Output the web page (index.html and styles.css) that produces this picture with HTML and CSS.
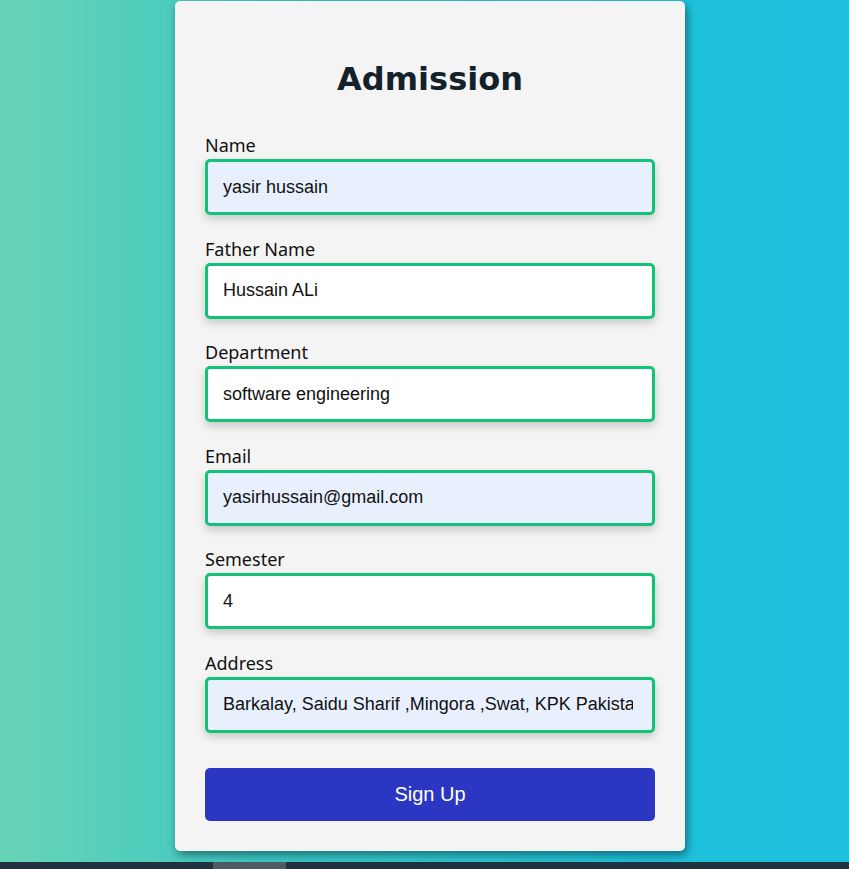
FILE: index.html
```html
<!DOCTYPE html>
<html lang="en">
<head>
<meta charset="utf-8">
<title>Admission</title>
<link rel="stylesheet" href="styles.css">
</head>
<body>
<main class="page">
  <form class="card">
    <h1 class="title">Admission</h1>
    <div class="field">
      <label class="label" for="name">Name</label>
      <input class="input autofill" id="name" type="text" value="yasir hussain">
    </div>
    <div class="field">
      <label class="label" for="father">Father Name</label>
      <input class="input" id="father" type="text" value="Hussain ALi">
    </div>
    <div class="field">
      <label class="label" for="dept">Department</label>
      <input class="input" id="dept" type="text" value="software engineering">
    </div>
    <div class="field">
      <label class="label" for="email">Email</label>
      <input class="input autofill" id="email" type="text" value="yasirhussain@gmail.com">
    </div>
    <div class="field">
      <label class="label" for="sem">Semester</label>
      <input class="input" id="sem" type="text" value="4">
    </div>
    <div class="field">
      <label class="label" for="addr">Address</label>
      <input class="input autofill" id="addr" type="text" value="Barkalay, Saidu Sharif ,Mingora ,Swat, KPK Pakistan">
    </div>
    <button class="submit" type="button">Sign Up</button>
  </form>
</main>
<div class="hscroll"><div class="hscroll-thumb"></div></div>
</body>
</html>
```

FILE: styles.css
```css
html, body {
  margin: 0;
  padding: 0;
  height: 100%;
  overflow: hidden;
}

body {
  background: linear-gradient(to right, #68d3b6 0%, #3fcac4 30%, #1fc2da 75%, #1dc1de 100%);
  font-family: "Noto Sans", "DejaVu Sans", sans-serif;
}

.page {
  display: flex;
  justify-content: center;
  padding-top: 1px;
  padding-left: 11px;
}

.card {
  width: 510px;
  box-sizing: border-box;
  padding: 30px;
  background: #f4f4f4;
  border-radius: 5px;
  box-shadow: 2px 4px 10px rgba(0, 40, 50, 0.55);
  display: flex;
  flex-direction: column;
}

.title {
  margin: 28px 0 35px;
  font-family: "DejaVu Sans", sans-serif;
  font-weight: bold;
  font-size: 32px;
  line-height: 40px;
  text-align: center;
  color: #12212a;
}

.field {
  display: flex;
  flex-direction: column;
  margin-bottom: 22.5px;
}

.label {
  font-size: 18px;
  line-height: 22px;
  color: #111;
  margin-bottom: 3px;
}

.input {
  box-sizing: border-box;
  height: 56px;
  width: 100%;
  border: 3px solid #12c278;
  border-radius: 5px;
  padding: 0 19px 0 15px;
  font-family: "Liberation Sans", Arial, sans-serif;
  font-size: 18px;
  color: #111;
  background: #fff;
  box-shadow: 0 4px 8px rgba(0, 0, 0, 0.18);
  outline: none;
}

.input.autofill {
  background: #e8f0fe;
}

.submit {
  margin-top: 12.5px;
  height: 53px;
  border: none;
  border-radius: 5px;
  background: #2b37c2;
  color: #fff;
  font-family: "Liberation Sans", Arial, sans-serif;
  font-size: 20px;
  cursor: pointer;
}

.hscroll {
  position: fixed;
  left: 0;
  right: 0;
  bottom: 0;
  height: 7px;
  background: #21313d;
  display: flex;
}

.hscroll-thumb {
  margin-left: 213px;
  width: 73px;
  background: #4f5a62;
}
```
